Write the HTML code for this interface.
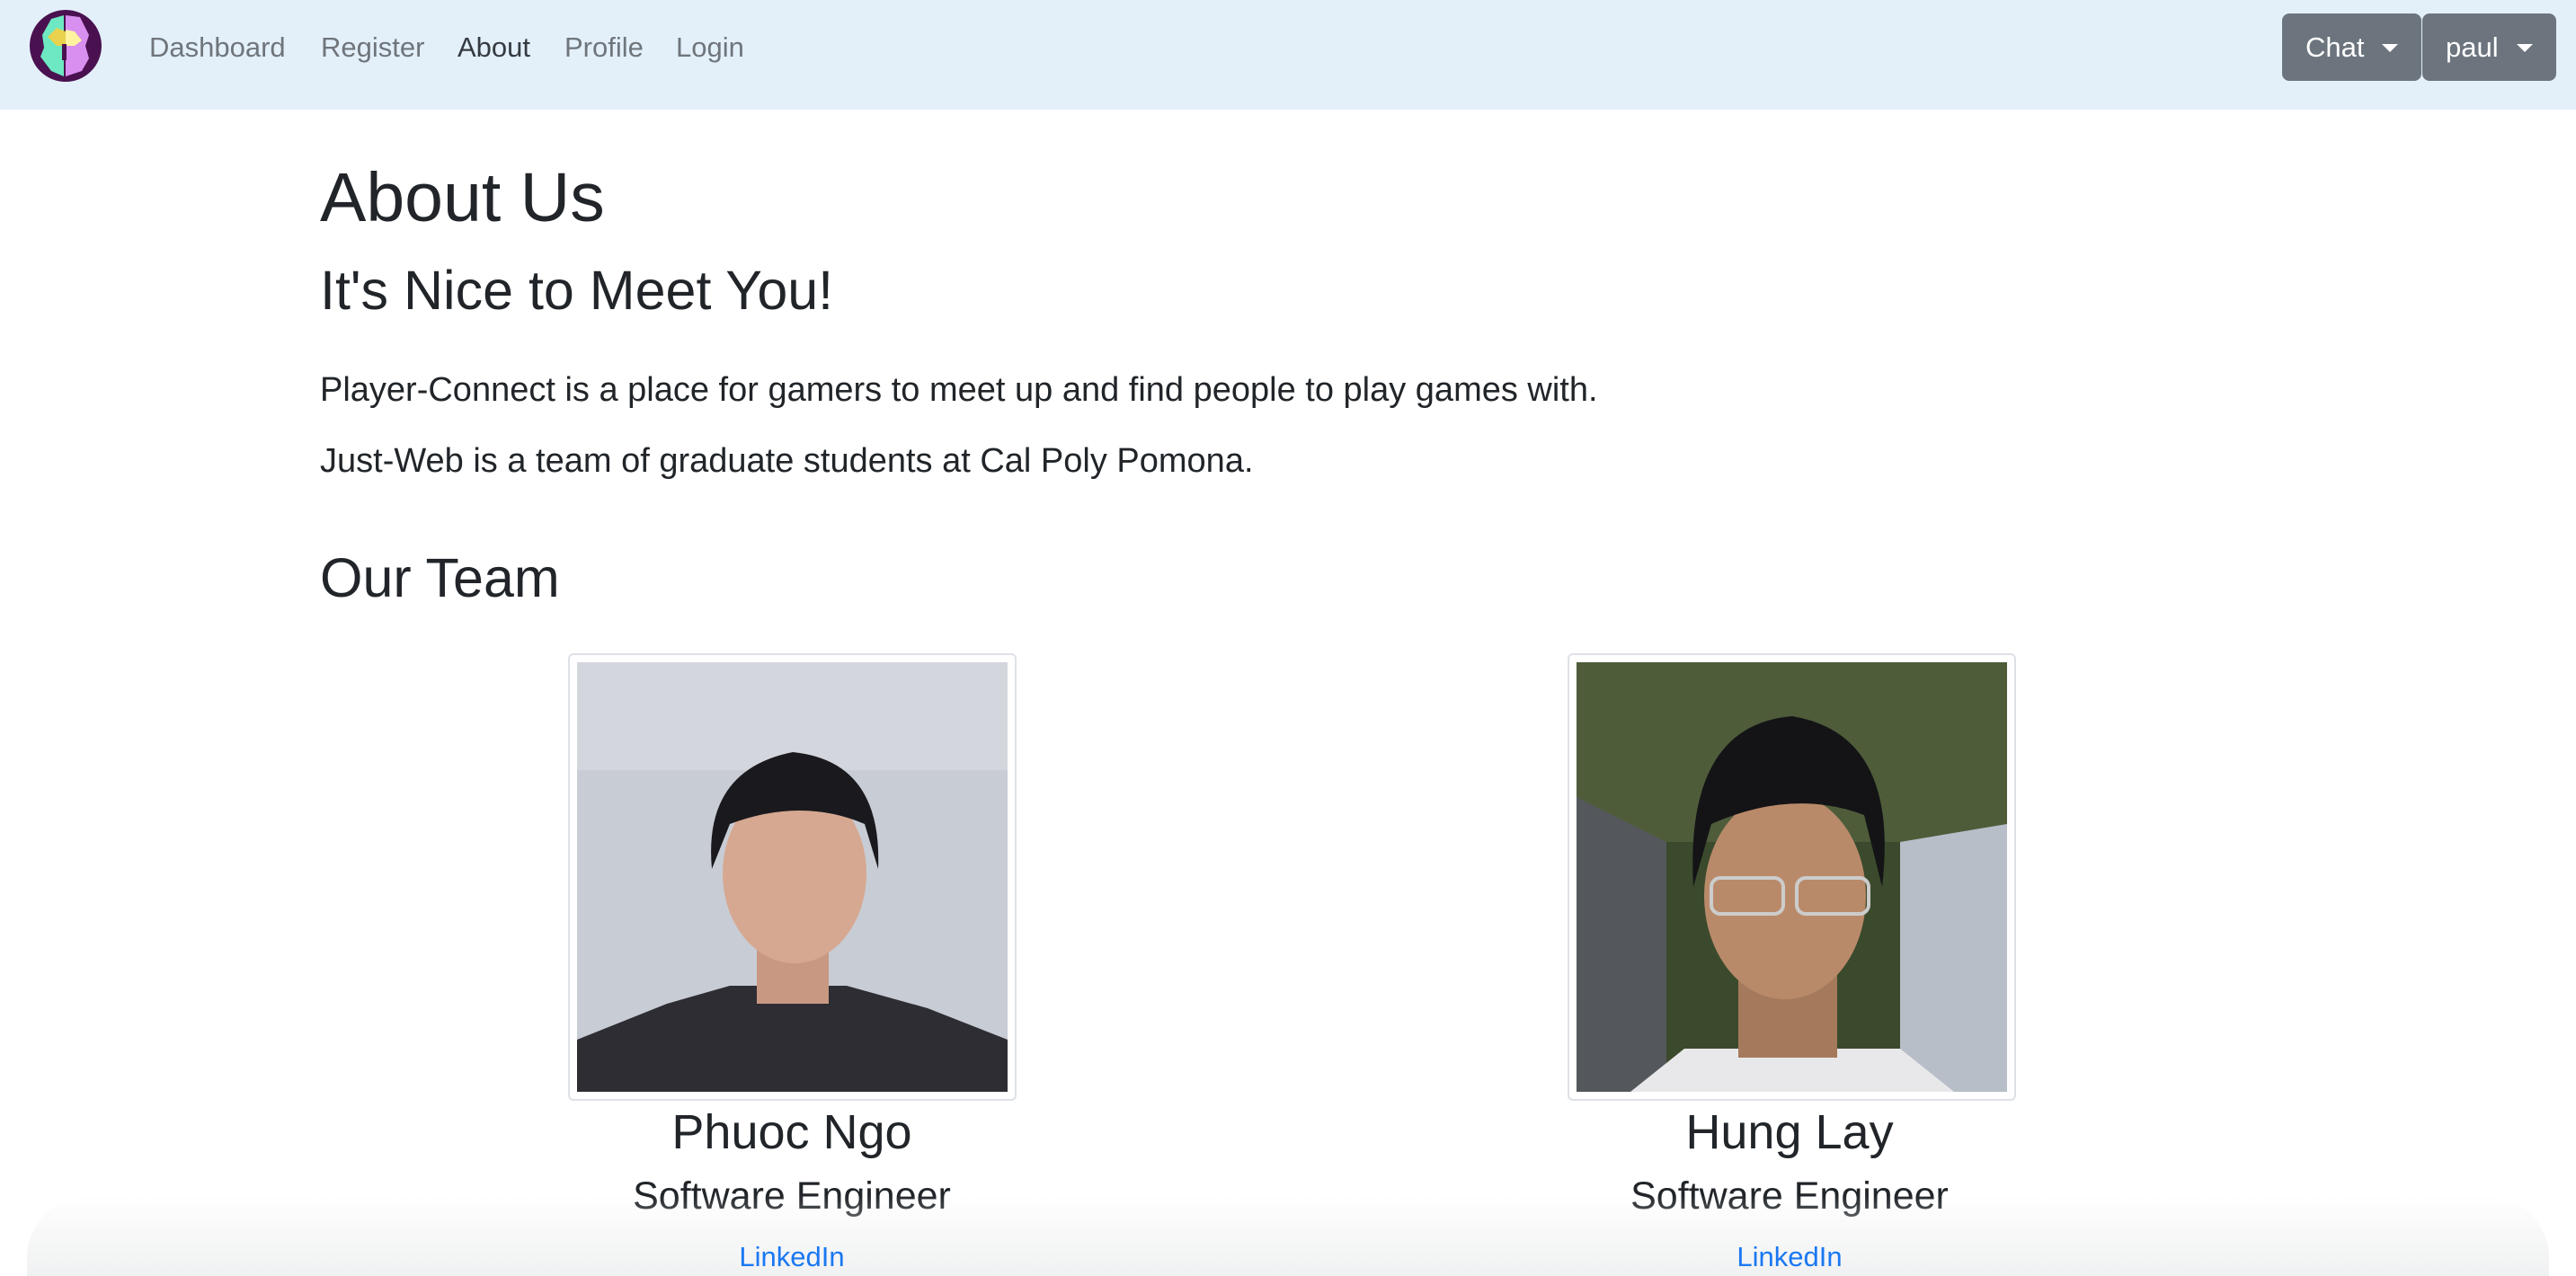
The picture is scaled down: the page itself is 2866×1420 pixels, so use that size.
<!DOCTYPE html>
<html><head><meta charset="utf-8"><style>
*{box-sizing:border-box;margin:0;padding:0}
body{width:2866px;height:1420px;overflow:hidden;background:#fff;font-family:"Liberation Sans",sans-serif;color:#212529;position:relative}
.nav{position:absolute;left:0;top:0;width:2866px;height:122px;background:#e3f0fa}
.nav a{position:absolute;top:35px;font-size:31px;color:#6f757b;text-decoration:none}
.btn{position:absolute;top:15px;height:75px;background:#6c757d;color:#fff;font-size:31px;border-radius:8px;line-height:75px;padding-left:26px}
.btn:after{content:"";position:absolute;right:26px;top:34px;border-left:9px solid transparent;border-right:9px solid transparent;border-top:9px solid #fff}
.t{position:absolute;left:356px;white-space:nowrap}
.card{position:absolute;top:727px;width:499px;height:498px;border:2px solid #dee2e6;border-radius:6px;padding:8px;background:#fff}
.card svg{display:block;width:479px;height:478px}
.c{position:absolute;width:600px;text-align:center;white-space:nowrap}
</style></head><body>
<div class="nav">
<svg style="position:absolute;left:33px;top:11px" width="80" height="80" viewBox="0 0 80 80">
<ellipse cx="40" cy="40" rx="40" ry="40" fill="#4a1150"/>
<path d="M14 28 L24 10 L38 6 L38 74 L24 68 L12 52 L16 42 Z" fill="#6de8c2"/>
<path d="M40 6 L56 8 L66 28 L62 40 L66 54 L58 68 L40 74 Z" fill="#d98ff0"/>
<path d="M20 30 L30 20 L40 24 L40 40 L30 40 Z" fill="#e8d24e"/>
<path d="M40 22 L50 24 L58 34 L50 40 L40 40 Z" fill="#fff3a0"/>
<rect x="36" y="38" width="5" height="18" fill="#4a1150"/>
</svg>
<a style="left:166px">Dashboard</a>
<a style="left:357px">Register</a>
<a style="left:509px;color:#343a40">About</a>
<a style="left:628px">Profile</a>
<a style="left:752px">Login</a>
<div class="btn" style="left:2539px;width:155px">Chat</div>
<div class="btn" style="left:2695px;width:149px;padding-left:26px">paul</div>
</div>
<div class="t" style="top:176px;font-size:77px">About Us</div>
<div class="t" style="top:288px;font-size:61px">It's Nice to Meet You!</div>
<div class="t" style="top:413px;font-size:38px">Player-Connect is a place for gamers to meet up and find people to play games with.</div>
<div class="t" style="top:492px;font-size:38px">Just-Web is a team of graduate students at Cal Poly Pomona.</div>
<div class="t" style="top:608px;font-size:61px">Our Team</div>

<div class="card" style="left:632px"><svg viewBox="0 0 479 478" preserveAspectRatio="none">
<rect width="479" height="478" fill="#c8ccd4"/>
<rect width="479" height="120" fill="#d3d6dc"/>
<path d="M0 478 L0 420 L100 380 L170 360 L300 360 L390 385 L479 420 L479 478Z" fill="#2d2d33"/>
<rect x="200" y="300" width="80" height="80" fill="#c89882"/>
<ellipse cx="242" cy="235" rx="80" ry="100" fill="#d6a891"/>
<path d="M150 230 Q140 120 240 100 Q340 110 335 230 L320 180 Q250 150 170 180Z" fill="#1a1a1e"/>
</svg></div>
<div class="card" style="left:1744px"><svg viewBox="0 0 479 478" preserveAspectRatio="none">
<rect width="479" height="478" fill="#3b4a2c"/>
<rect x="0" y="0" width="479" height="200" fill="#4e5c3a"/>
<path d="M0 150 L100 200 L100 478 L0 478Z" fill="#54585c"/>
<path d="M360 200 L479 180 L479 478 L360 478Z" fill="#b7bec8"/>
<path d="M60 478 L120 430 L360 430 L420 478Z" fill="#e8e8ea"/>
<rect x="180" y="330" width="110" height="110" fill="#a57a5c"/>
<ellipse cx="232" cy="260" rx="90" ry="115" fill="#b98a6a"/>
<path d="M130 250 Q120 70 240 60 Q360 80 340 250 L320 170 Q240 140 150 180Z" fill="#141416"/>
<rect x="150" y="240" width="80" height="40" rx="10" fill="none" stroke="#ccc" stroke-width="4"/>
<rect x="245" y="240" width="80" height="40" rx="10" fill="none" stroke="#ccc" stroke-width="4"/>
</svg></div>

<div class="c" style="left:581px;top:1229px;font-size:54px">Phuoc Ngo</div>
<div class="c" style="left:1691px;top:1229px;font-size:54px">Hung Lay</div>
<div class="c" style="left:581px;top:1307px;font-size:43px">Software Engineer</div>
<div class="c" style="left:1691px;top:1307px;font-size:43px">Software Engineer</div>
<div style="position:absolute;left:30px;right:30px;bottom:0;height:90px;border-radius:70px 70px 0 0;background:linear-gradient(rgba(243,244,245,0),rgba(240,241,242,1))"></div>
<div class="c" style="left:581px;top:1381px;font-size:31px;color:#1a78f2">LinkedIn</div>
<div class="c" style="left:1691px;top:1381px;font-size:31px;color:#1a78f2">LinkedIn</div>
</body></html>
